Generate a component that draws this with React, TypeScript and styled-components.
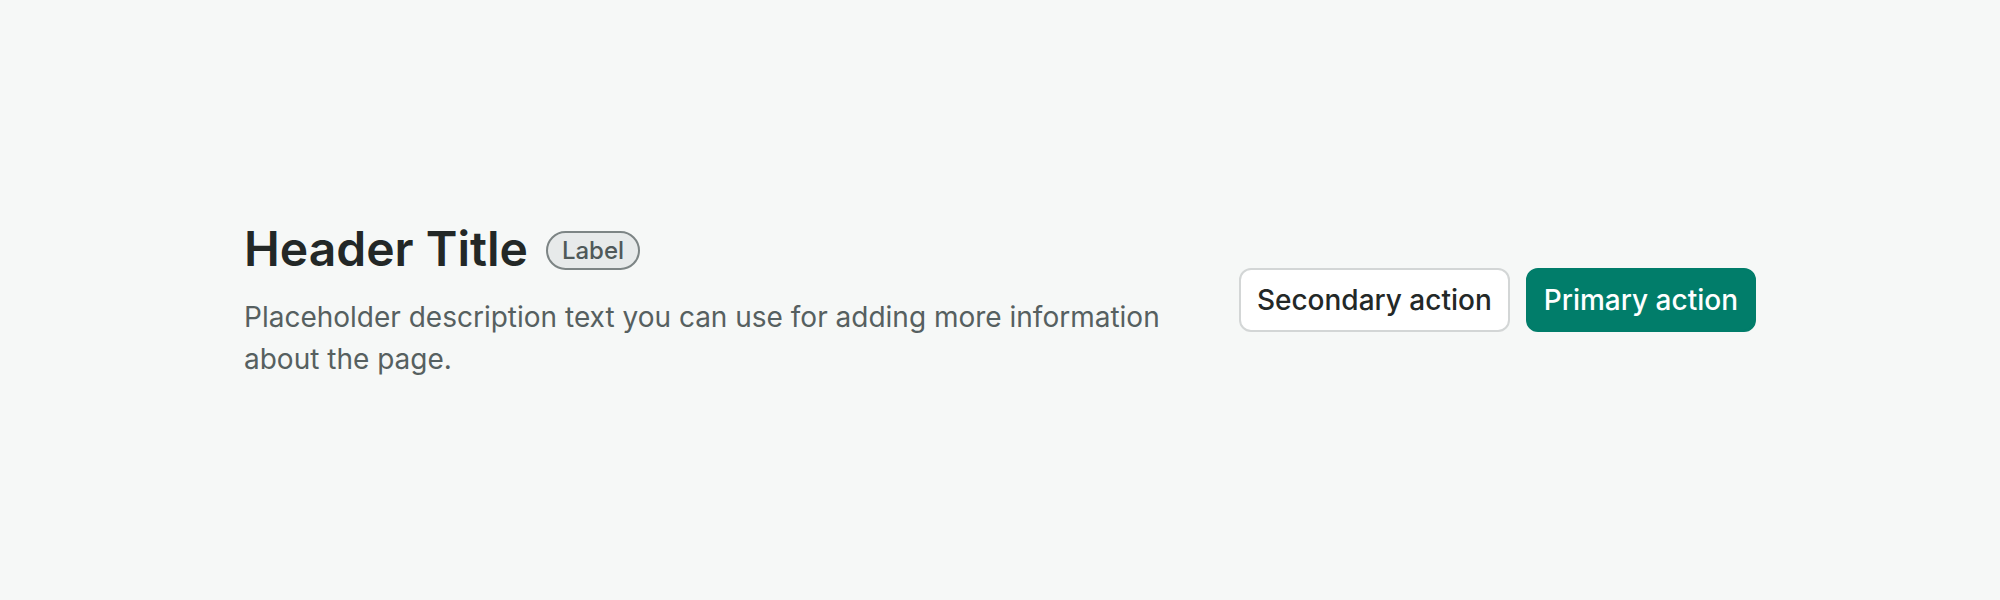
import styled, { createGlobalStyle } from 'styled-components';

const GlobalStyle = createGlobalStyle`
  html, body {
    margin: 0;
    padding: 0;
    background: #f6f8f7;
  }

  body {
    font-family: Inter, "Noto Sans", sans-serif;
  }
`;

const App = () => {
  return (
    <>
      <GlobalStyle />
      <Page>
        <Header>
          <Intro>
            <TitleRow>
              <Title>Header Title</Title>
              <Badge>Label</Badge>
            </TitleRow>
            <Description>
              Placeholder description text you can use for adding more information about the page.
            </Description>
          </Intro>
          <Actions>
            <Button>Secondary action</Button>
            <Button $primary>Primary action</Button>
          </Actions>
        </Header>
      </Page>
    </>
  );
};

export default App;

const Page = styled.main`
  display: flex;
  align-items: center;
  justify-content: center;
  min-height: 600px;
`;

const Header = styled.header`
  display: flex;
  align-items: center;
  justify-content: space-between;
  gap: 32px;
  width: 1512px;
`;

const Intro = styled.div`
  display: flex;
  flex-direction: column;
  gap: 19px;
  max-width: 960px;
`;

const TitleRow = styled.div`
  display: flex;
  align-items: center;
  gap: 18px;
`;

const Title = styled.h1`
  margin: 0;
  font-size: 48px;
  line-height: 1.2;
  font-weight: 600;
  color: #232827;
`;

const Badge = styled.span`
  display: inline-flex;
  align-items: center;
  height: 39px;
  box-sizing: border-box;
  padding: 0 14px;
  border: 2px solid #7d8585;
  border-radius: 999px;
  background: #e7eaea;
  color: #4f5959;
  font-size: 24px;
  font-weight: 500;
  margin-top: 3px;
`;

const Description = styled.p`
  margin: 0;
  font-size: 28px;
  line-height: 42px;
  color: #566060;
`;

const Actions = styled.div`
  display: flex;
  align-items: center;
  gap: 16px;
  flex-shrink: 0;
`;

const Button = styled.button<{ $primary?: boolean }>`
  height: 64px;
  padding: 0 16px;
  border-radius: 12px;
  border: 2px solid ${({ $primary }) => ($primary ? '#017d6a' : '#d3d6d6')};
  background: ${({ $primary }) => ($primary ? '#017d6a' : '#ffffff')};
  color: ${({ $primary }) => ($primary ? '#ffffff' : '#232827')};
  font-family: Inter, "Noto Sans", sans-serif;
  font-size: 28px;
  font-weight: 500;
  cursor: pointer;
`;
